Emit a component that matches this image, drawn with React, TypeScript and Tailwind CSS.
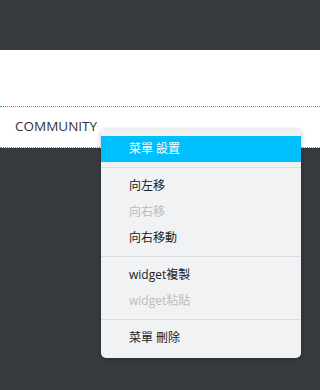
import React from 'react';

type Item = { label: string; disabled?: boolean; active?: boolean } | 'sep';

const items: Item[] = [
    { label: '菜單 設置', active: true },
    'sep',
    { label: '向左移' },
    { label: '向右移', disabled: true },
    { label: '向右移動' },
    'sep',
    { label: 'widget複製' },
    { label: 'widget粘貼', disabled: true },
    'sep',
    { label: '菜單 刪除' },
];

const font = { fontFamily: '"Open Sans", "Noto Sans CJK TC", sans-serif' };

const App: React.FC = () => {
    return (
        <div className="relative w-[320px] h-[390px] bg-[#373b3e] overflow-hidden" style={font}>
            <div className="h-[50px]" />
            <div className="bg-white">
                <div className="h-[57px] border-b border-dotted border-[#1ea7e6]" />
                <div className="h-[41px] border-b border-dotted border-[#1ea7e6] pl-[15px] pt-[9px] text-[13.5px] text-[#333] leading-[20px]">
                    COMMUNITY
                </div>
            </div>

            <div className="absolute left-[101px] top-[129px] w-[200px] rounded-[5px] bg-[#f1f2f4] py-[7px] shadow-[0_1px_4px_rgba(0,0,0,0.3)]">
                {items.map((it, i) =>
                    it === 'sep' ? (
                        <div key={i} className="my-[5px] h-px bg-[#dcdde0]" />
                    ) : (
                        <div
                            key={i}
                            className={`h-[26px] pl-[28px] flex items-center text-[12px] ${
                                it.active ? 'bg-[#00bfff] text-white' : it.disabled ? 'text-[#bcbcbc]' : 'text-[#222]'
                            }`}
                        >
                            {it.label}
                        </div>
                    )
                )}
            </div>
        </div>
    );
};

export default App;
